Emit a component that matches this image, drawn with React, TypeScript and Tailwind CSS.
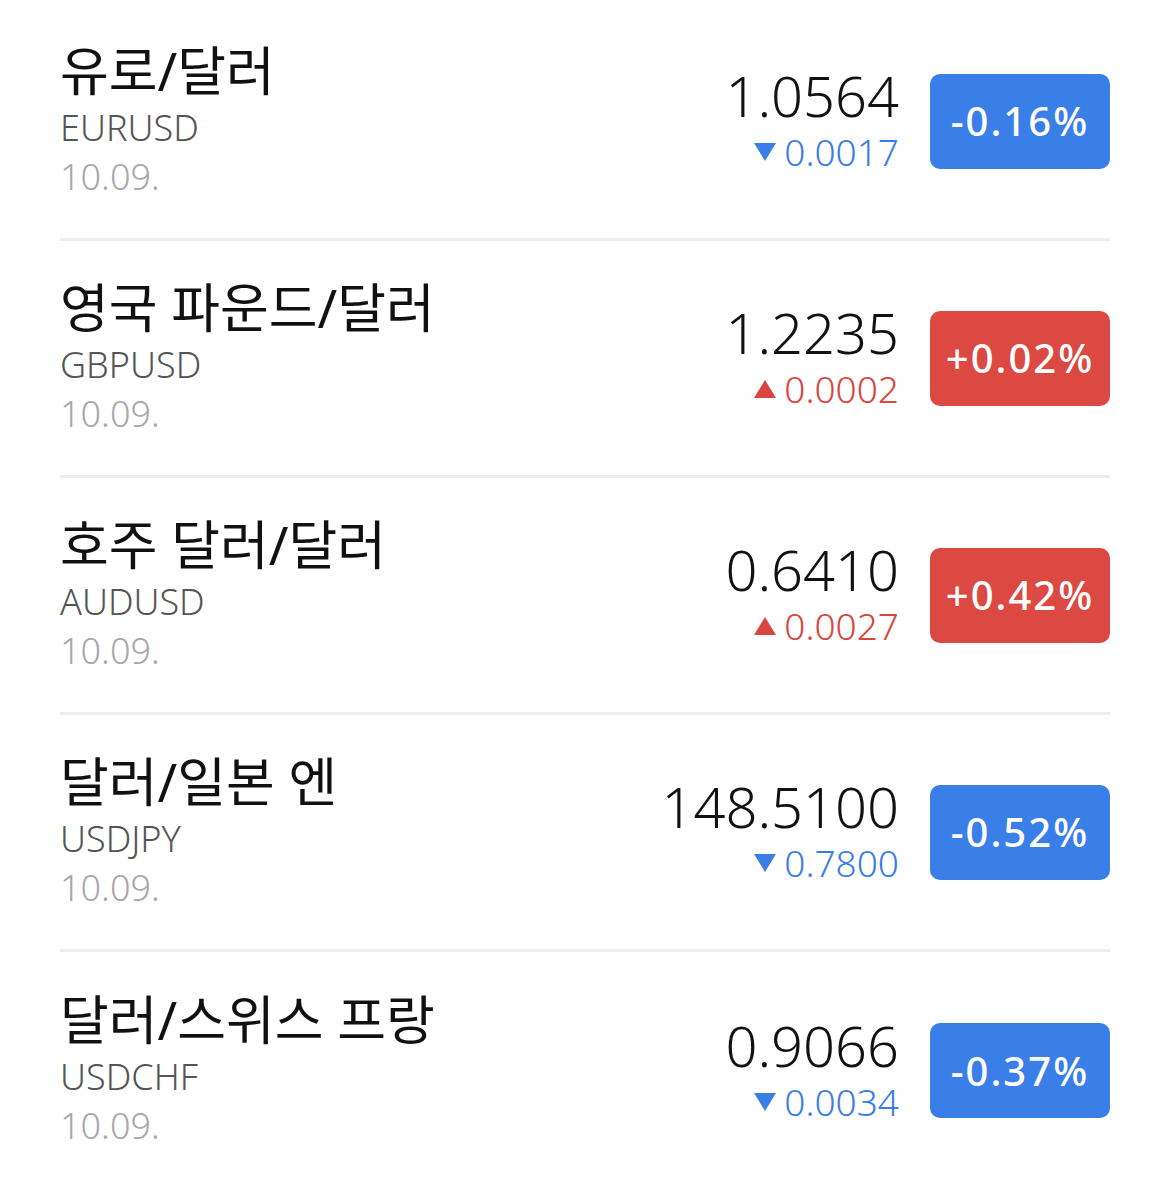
type Quote = {
  name: string
  code: string
  date: string
  price: string
  change: string
  pct: string
  up: boolean
}

const quotes: Quote[] = [
  {name: '유로/달러', code: 'EURUSD', date: '10.09.', price: '1.0564', change: '0.0017', pct: '-0.16%', up: false},
  {name: '영국 파운드/달러', code: 'GBPUSD', date: '10.09.', price: '1.2235', change: '0.0002', pct: '+0.02%', up: true},
  {name: '호주 달러/달러', code: 'AUDUSD', date: '10.09.', price: '0.6410', change: '0.0027', pct: '+0.42%', up: true},
  {name: '달러/일본 엔', code: 'USDJPY', date: '10.09.', price: '148.5100', change: '0.7800', pct: '-0.52%', up: false},
  {name: '달러/스위스 프랑', code: 'USDCHF', date: '10.09.', price: '0.9066', change: '0.0034', pct: '-0.37%', up: false},
]

function Triangle({up}: {up: boolean}) {
  return (
    <svg width="22" height="18" viewBox="0 0 22 18" className={up ? 'fill-[#d9453f]' : 'fill-[#3a7de6]'}>
      {up ? <polygon points="11,0 22,18 0,18"/> : <polygon points="0,0 22,0 11,18"/>}
    </svg>
  )
}

function Row({q, last}: {q: Quote; last: boolean}) {
  return (
    <div className={`h-[237px] flex items-center justify-between ${last ? '' : 'border-b-[3px] border-[#ededed]'}`}>
      <div className="flex flex-col">
        <div className="text-[53px] leading-[58px] text-[#111] font-normal">{q.name}</div>
        <div className="text-[36px] leading-[48px] text-[#555] mt-[4px]">{q.code}</div>
        <div className="text-[36px] leading-[48px] text-[#a8a8a8] mt-[1px]">{q.date}</div>
      </div>
      <div className="flex items-center gap-[31px]">
        <div className="flex flex-col items-end">
          <div className="text-[56px] leading-[62px] text-[#111]">{q.price}</div>
          <div className={`flex items-center gap-[8px] text-[37px] leading-[52px] ${q.up ? 'text-[#d9453f]' : 'text-[#3a7de6]'}`}>
            <Triangle up={q.up}/>
            <span>{q.change}</span>
          </div>
        </div>
        <div
          className={`w-[180px] h-[95px] rounded-[10px] flex items-center justify-center text-white text-[40px] font-medium tracking-[2px] ${q.up ? 'bg-[#dc4842]' : 'bg-[#3a7ee8]'}`}>
          {q.pct}
        </div>
      </div>
    </div>
  )
}

function App() {
  return (
    <div className="w-full min-h-screen bg-white pt-[4px] px-[60px] font-[350] font-['Noto_Sans','Noto_Sans_CJK_KR',sans-serif]">
      {quotes.map((q, i) => (
        <Row key={q.code} q={q} last={i === quotes.length - 1}/>
      ))}
    </div>
  )
}

export default App
